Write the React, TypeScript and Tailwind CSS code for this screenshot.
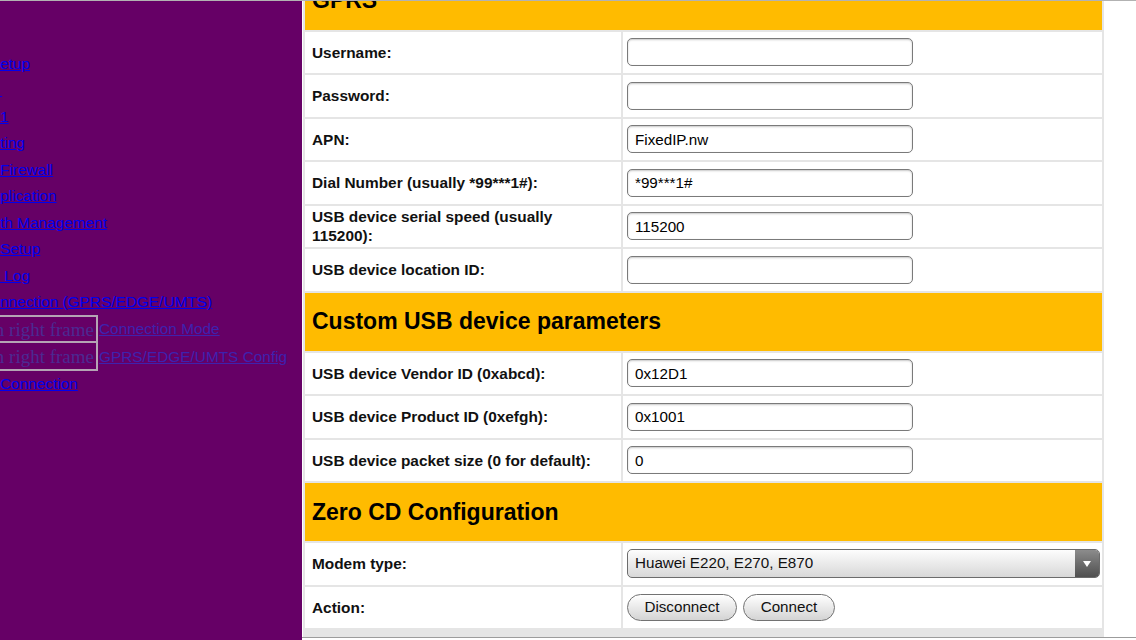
import React from 'react'

const FONT = { fontFamily: '"Liberation Sans", Arial, sans-serif' }
const SERIF = { fontFamily: '"Liberation Serif", "Times New Roman", serif' }

type NavRow = { text: string }

const NAV_ROWS: NavRow[] = [
  { text: 'etup' },
  { text: '' },
  { text: '1' },
  { text: 'ting' },
  { text: 'Firewall' },
  { text: 'plication' },
  { text: 'th Management' },
  { text: 'Setup' },
  { text: '\u00a0Log' },
  { text: 'nnection (GPRS/EDGE/UMTS)' },
]

function SideNav() {
  return (
    <div className="w-[302px] shrink-0 h-full bg-[#660066] overflow-hidden pt-[49px] text-[15.4px]" style={FONT}>
      {NAV_ROWS.map((r, i) => (
        <div key={i} className="h-[26.5px] flex items-center whitespace-nowrap">
          {r.text ? (
            <a className="text-[#0000ee] underline cursor-pointer">{r.text}</a>
          ) : (
            <span className="inline-block w-[2px] h-px bg-[#0000ee] mt-[14px]" />
          )}
        </div>
      ))}
      {['Connection Mode', 'GPRS/EDGE/UMTS Config'].map((label, i) => (
        <div key={label} className="h-[28px] flex items-center whitespace-nowrap">
          <div
            className={[
              'w-[98px] h-[28px] border-2 border-[#b4a4b4] border-l-0 overflow-hidden flex items-center justify-end pr-[2px]',
              i === 1 ? 'border-t-0' : '',
            ].join(' ')}
          >
            <span className="text-[19px] text-[#4c2a92] leading-none" style={SERIF}>
              n right frame
            </span>
          </div>
          <a className="ml-px text-[#3e22ae] underline cursor-pointer">{label}</a>
        </div>
      ))}
      <div className="h-[26px] flex items-center whitespace-nowrap">
        <a className="text-[#0000ee] underline cursor-pointer">Connection</a>
      </div>
    </div>
  )
}

function SectionHeader({ title }: { title: string }) {
  return (
    <div className="col-span-2 h-[58px] bg-[#ffbb00] flex items-center px-[7px]">
      <span className="text-[23px] font-bold text-black">{title}</span>
    </div>
  )
}

function TextBox({ value = '' }: { value?: string }) {
  return (
    <input
      readOnly
      value={value}
      className="w-[286px] h-[28px] rounded-[5px] border border-[#7a7a7a] bg-white px-[7px] text-[15.2px] text-black shadow-[inset_0_1px_2px_rgba(0,0,0,0.22)] outline-none"
      style={FONT}
    />
  )
}

function Row({ label, children }: { label: string; children: React.ReactNode }) {
  return (
    <>
      <div className="h-[41.5px] bg-white flex items-center pl-[7px] pr-[7px] text-[15.4px] font-bold leading-[19px] text-[#111]">
        {label}
      </div>
      <div className="h-[41.5px] bg-white flex items-center pl-[4px] gap-[6px]">{children}</div>
    </>
  )
}

function PillButton({ label, w }: { label: string; w: string }) {
  return (
    <button
      className={`${w} h-[27px] rounded-full border border-[#727272] bg-gradient-to-b from-white to-[#d4d4d4] text-[15.2px] text-[#111] flex items-center justify-center`}
      style={FONT}
    >
      {label}
    </button>
  )
}

function ModemSelect() {
  return (
    <div className="w-[473px] h-[29px] rounded-[5px] border border-[#6c6c6c] bg-gradient-to-b from-[#fdfdfd] to-[#d8d8d8] flex items-center overflow-hidden">
      <span className="flex-1 pl-[7px] text-[15.2px] text-[#111]">Huawei E220, E270, E870</span>
      <div className="w-[24px] h-full bg-gradient-to-b from-[#8c8c8c] to-[#505050] flex items-center justify-center">
        <svg width="10" height="8" viewBox="0 0 10 8">
          <path d="M1 1h8L5 7z" fill="#fff" />
        </svg>
      </div>
    </div>
  )
}

export default function App() {
  return (
    <div className="w-[1136px] h-[640px] overflow-hidden flex bg-white border-t border-black/30" style={FONT}>
      <SideNav />
      <div className="flex-1 h-full overflow-hidden flex flex-col">
        <div className="ml-px w-[801px] -mt-[31.5px] bg-[#e5e5e5] p-[2px] pb-[9px] grid grid-cols-[316px_479px] gap-[2px]">
          <SectionHeader title="GPRS" />
          <Row label="Username:"><TextBox /></Row>
          <Row label="Password:"><TextBox /></Row>
          <Row label="APN:"><TextBox value="FixedIP.nw" /></Row>
          <Row label="Dial Number (usually *99***1#):"><TextBox value="*99***1#" /></Row>
          <Row label="USB device serial speed (usually 115200):"><TextBox value="115200" /></Row>
          <Row label="USB device location ID:"><TextBox /></Row>
          <SectionHeader title="Custom USB device parameters" />
          <Row label="USB device Vendor ID (0xabcd):"><TextBox value="0x12D1" /></Row>
          <Row label="USB device Product ID (0xefgh):"><TextBox value="0x1001" /></Row>
          <Row label="USB device packet size (0 for default):"><TextBox value="0" /></Row>
          <SectionHeader title="Zero CD Configuration" />
          <Row label="Modem type:"><ModemSelect /></Row>
          <Row label="Action:">
            <PillButton label="Disconnect" w="w-[110px]" />
            <PillButton label="Connect" w="w-[92px]" />
          </Row>
        </div>
        <div className="h-px bg-[#9c9c9c] shrink-0" />
      </div>
    </div>
  )
}
